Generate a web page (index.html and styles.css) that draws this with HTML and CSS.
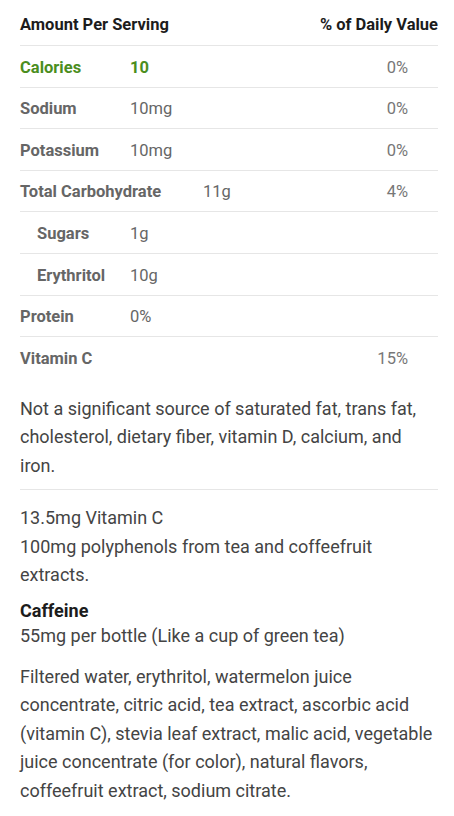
FILE: index.html
```html
<!DOCTYPE html>
<html lang="en">
<head>
<meta charset="utf-8">
<link rel="stylesheet" href="styles.css">
</head>
<body>
<div class="page">
  <div class="head">
    <span>Amount Per Serving</span>
    <span>% of Daily Value</span>
  </div>
  <div class="row cal">
    <span class="name">Calories</span><span class="val">10</span><span class="pct">0%</span>
  </div>
  <div class="row">
    <span class="name">Sodium</span><span class="val">10mg</span><span class="pct">0%</span>
  </div>
  <div class="row">
    <span class="name">Potassium</span><span class="val">10mg</span><span class="pct">0%</span>
  </div>
  <div class="row">
    <span class="name wide">Total Carbohydrate</span><span class="val">11g</span><span class="pct">4%</span>
  </div>
  <div class="row">
    <span class="name sub">Sugars</span><span class="val">1g</span><span class="pct"></span>
  </div>
  <div class="row">
    <span class="name sub">Erythritol</span><span class="val">10g</span><span class="pct"></span>
  </div>
  <div class="row">
    <span class="name">Protein</span><span class="val">0%</span><span class="pct"></span>
  </div>
  <div class="row last">
    <span class="name">Vitamin C</span><span class="val"></span><span class="pct">15%</span>
  </div>
  <p class="note">Not a significant source of saturated fat, trans fat, cholesterol, dietary fiber, vitamin D, calcium, and iron.</p>
  <div class="extra">
    <p class="text">13.5mg Vitamin C<br>100mg polyphenols from tea and coffeefruit extracts.</p>
    <h3 class="caf">Caffeine</h3>
    <p class="caf-text">55mg per bottle (Like a cup of green tea)</p>
    <p class="text ingr">Filtered water, erythritol, watermelon juice concentrate, citric acid, tea extract, ascorbic acid (vitamin C), stevia leaf extract, malic acid, vegetable juice concentrate (for color), natural flavors, coffeefruit extract, sodium citrate.</p>
  </div>
</div>
</body>
</html>
```
FILE: styles.css
```css
html, body {
  margin: 0;
  padding: 0;
  background: #fff;
}
body {
  font-family: Roboto, "Liberation Sans", sans-serif;
}
.page {
  padding: 0 16px 0 20px;
}
.head {
  display: flex;
  justify-content: space-between;
  align-items: center;
  height: 46px;
  padding-top: 3px;
  box-sizing: border-box;
  font-weight: 700;
  font-size: 16.5px;
  color: #1c1c1c;
  border-bottom: 1px solid #e6e6e6;
}
.row {
  display: flex;
  align-items: center;
  height: 41.6px;
  padding-top: 1.5px;
  box-sizing: border-box;
  border-bottom: 1px solid #e6e6e6;
  font-size: 16.5px;
  color: #666;
}
.row.last {
  border-bottom: none;
}
.name {
  flex: 0 0 110px;
  font-weight: 700;
  box-sizing: border-box;
}
.name.wide {
  flex-basis: 183px;
}
.name.sub {
  padding-left: 17px;
}
.val {
  flex: 1;
}
.pct {
  padding-right: 30px;
  color: #777;
}
.cal {
  color: #4b8e1e;
}
.cal .val {
  font-weight: 700;
}
.cal .pct {
  color: #777;
}
.note {
  margin: 16px 0 0;
  padding-bottom: 9px;
  font-size: 18px;
  line-height: 28.5px;
  color: #444;
  border-bottom: 1px solid #e6e6e6;
}
.extra {
  padding-top: 14px;
}
.text {
  margin: 0;
  font-size: 18px;
  line-height: 28.5px;
  color: #444;
}
.caf {
  margin: 9px 0 0;
  font-size: 18px;
  line-height: 24px;
  font-weight: 700;
  color: #1c1c1c;
}
.caf-text {
  margin: 0;
  font-size: 18px;
  line-height: 26px;
  color: #444;
}
.ingr {
  margin-top: 14px;
}
```
